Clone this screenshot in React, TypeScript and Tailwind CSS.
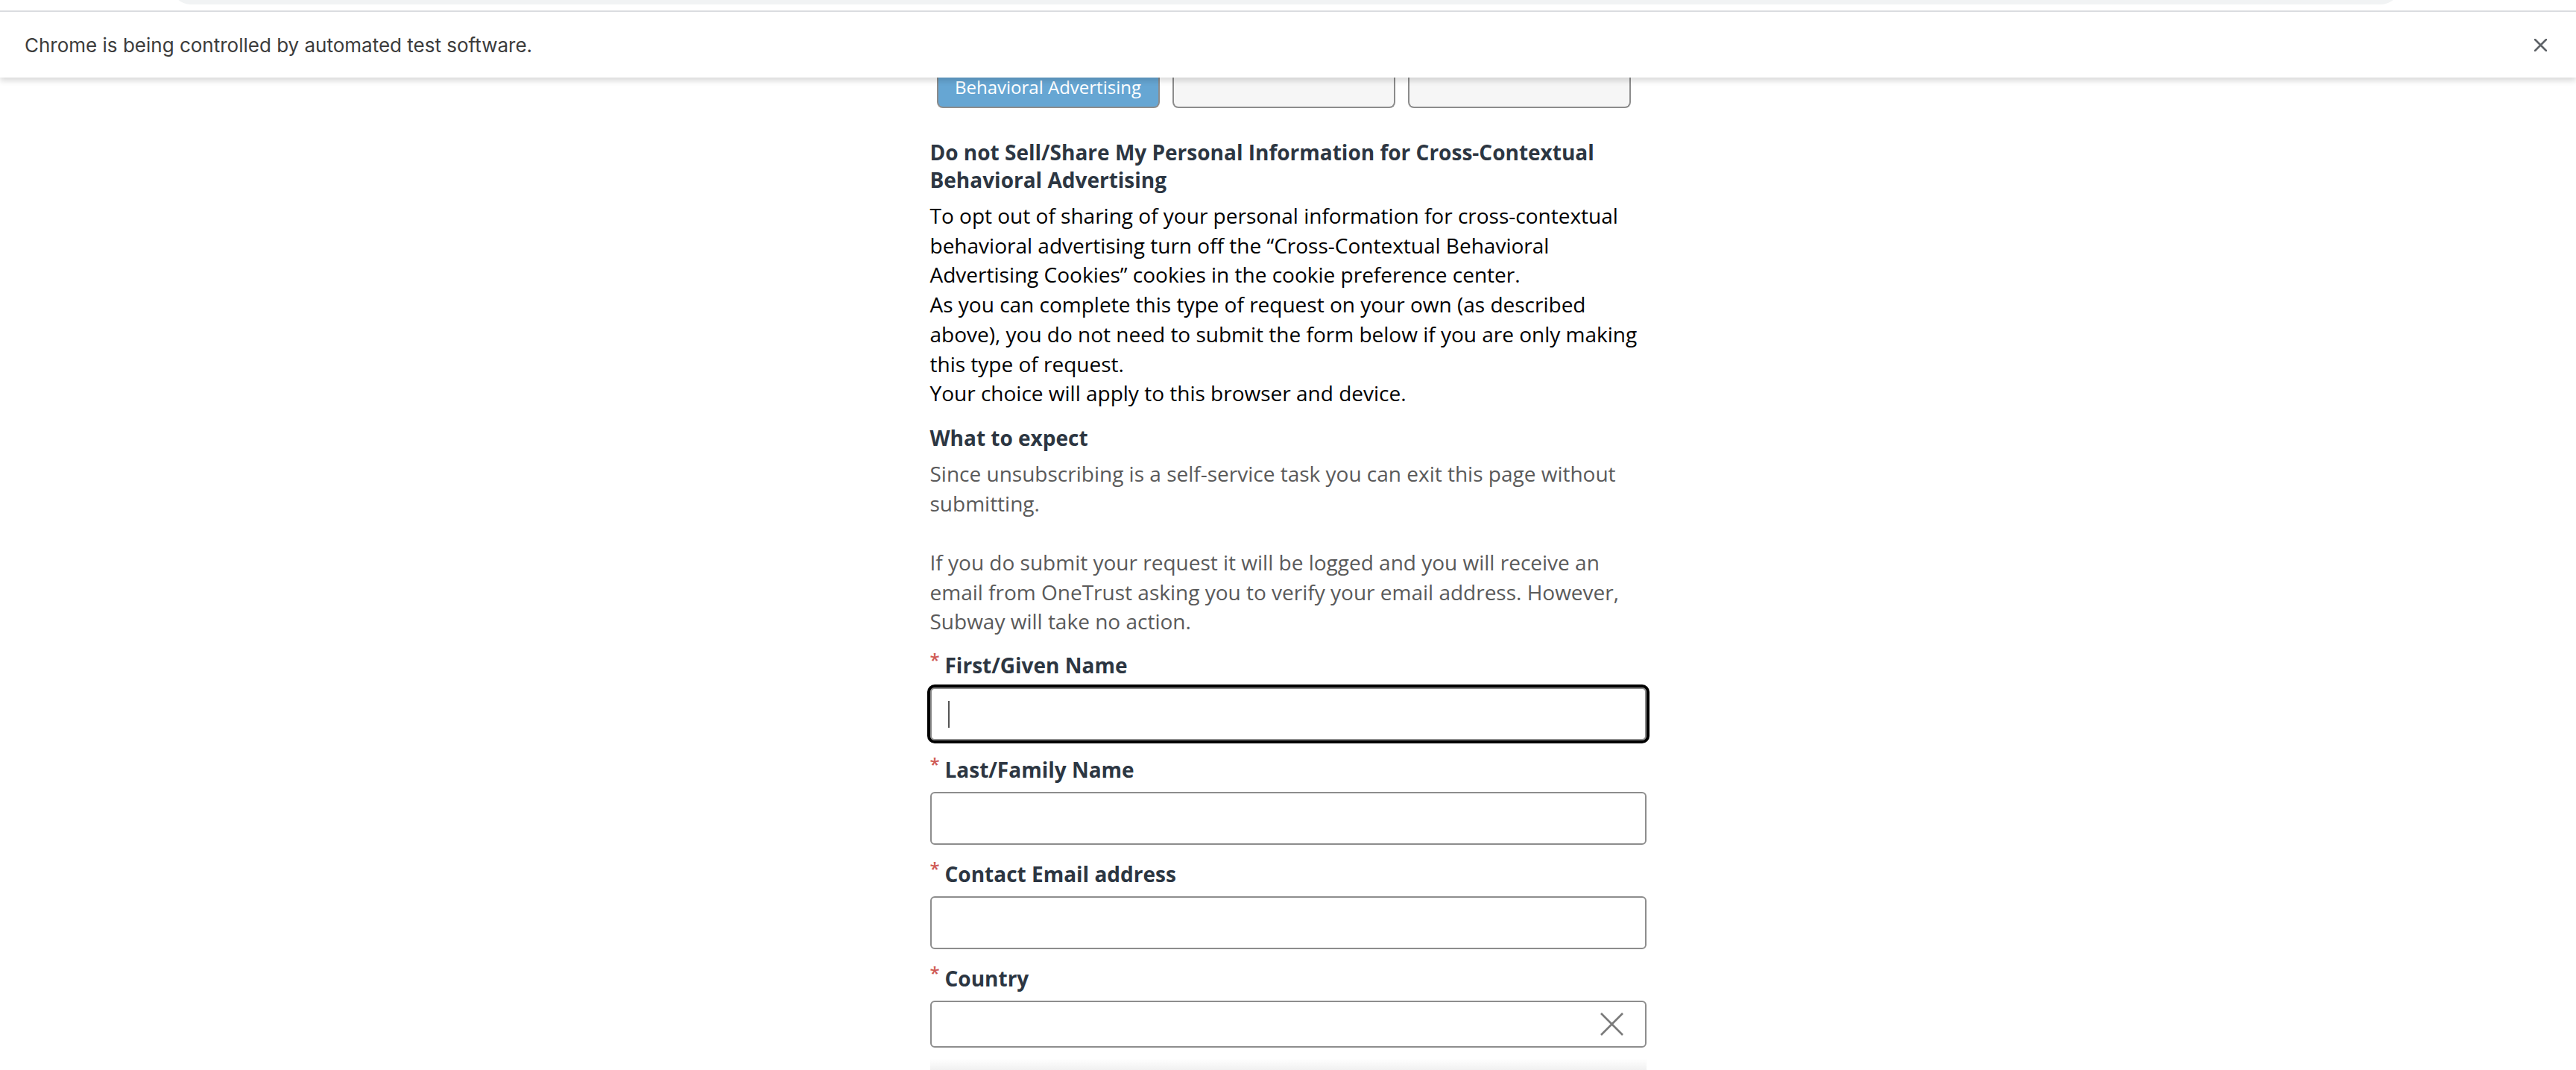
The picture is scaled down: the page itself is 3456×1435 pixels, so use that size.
import type { ReactNode } from "react";

const FONT = { fontFamily: '"Open Sans", "Noto Sans", sans-serif' };

function Label({ children }: { children: ReactNode }) {
  return (
    <div className="mb-[11px] flex items-start gap-[7px] font-bold text-[28px] leading-[37px] text-[#2c3642]">
      <span className="-mt-[1px] w-[13px] text-[24px] font-semibold leading-[24px] text-[#cf5a54]">*</span>
      <span>{children}</span>
    </div>
  );
}

function Field({ label }: { label: string }) {
  return (
    <div className="mt-[21px]">
      <Label>{label}</Label>
      <input
        type="text"
        aria-label={label}
        className="block h-[71px] w-full rounded-[6px] border-2 border-[#8d8d8d] bg-white px-[22px] text-[28px] outline-none"
      />
    </div>
  );
}

export default function App() {
  return (
    <div className="min-h-screen bg-white" style={FONT}>
      {/* browser chrome + automation infobar */}
      <header className="relative z-10 bg-white shadow-[0_4px_8px_rgba(0,0,0,0.16)]">
        <div className="flex h-[6px] items-end overflow-hidden pl-[230px] pr-[236px]">
          <div className="h-[40px] w-full shrink-0 rounded-b-[26px] bg-[#f1f3f4]" />
        </div>
        <div className="h-[8px]" />
        <div className="h-[2px] bg-[#dadce0]" />
        <div
          className="flex h-[88px] items-center justify-between pl-[33px] pr-[39px] text-[26px] text-[#3c3c3c]"
          style={{ fontFamily: 'Inter, "Liberation Sans", sans-serif' }}
        >
          <span>Chrome is being controlled by automated test software.</span>
          <svg width="17" height="17" viewBox="0 0 17 17" aria-hidden="true">
            <path d="M1 1 L16 16 M16 1 L1 16" stroke="#5f6368" strokeWidth="2.6" strokeLinecap="round" />
          </svg>
        </div>
      </header>

      <main className="mx-auto w-[961px]">
        {/* tabs (top hidden under the infobar) */}
        <div className="flex h-[41px] gap-[17px] pl-[9px]">
          <div className="flex w-[299px] justify-center rounded-b-[8px] border-x-2 border-b-2 border-[#8c8c8c] bg-[#66a6d3]">
            <span className="text-[24px] leading-[26px] text-white">Behavioral Advertising</span>
          </div>
          <div className="w-[299px] rounded-b-[8px] border-x-2 border-b-2 border-[#8c8c8c] bg-[#f6f6f6]" />
          <div className="w-[299px] rounded-b-[8px] border-x-2 border-b-2 border-[#8c8c8c] bg-[#f6f6f6]" />
        </div>

        <h2 className="mt-[41px] mb-[10px] text-[28px] font-bold leading-[37px] text-[#2c3642]">
          Do not Sell/Share My Personal Information for Cross-Contextual
          <br />
          Behavioral Advertising
        </h2>
        <div className="whitespace-nowrap text-[28px] leading-[39.7px] text-black">
          <p>
            To opt out of sharing of your personal information for cross-contextual
            <br />
            behavioral advertising turn off the “Cross-Contextual Behavioral
            <br />
            Advertising Cookies” cookies in the cookie preference center.
          </p>
          <p>
            As you can complete this type of request on your own (as described
            <br />
            above), you do not need to submit the form below if you are only making
            <br />
            this type of request.
          </p>
          <p>Your choice will apply to this browser and device.</p>
        </div>

        <h3 className="mt-[21px] mb-[10px] text-[28px] font-bold leading-[37px] text-[#2c3642]">What to expect</h3>
        <div className="whitespace-nowrap text-[28px] leading-[39.7px] text-[#5a5a5a]">
          <p>
            Since unsubscribing is a self-service task you can exit this page without
            <br />
            submitting.
          </p>
          <p className="mt-[39.7px]">
            If you do submit your request it will be logged and you will receive an
            <br />
            email from OneTrust asking you to verify your email address. However,
            <br />
            Subway will take no action.
          </p>
        </div>

        <form onSubmit={(e) => e.preventDefault()}>
          <div className="mt-[20px]">
            <Label>First/Given Name</Label>
            <div
              role="textbox"
              aria-label="First/Given Name"
              className="flex h-[71px] items-center rounded-[6px] border-2 border-[#8d8d8d] bg-white pl-[22px] outline-4 outline-solid outline-black"
            >
              <span className="h-[36px] w-[2px] bg-[#555]" />
            </div>
          </div>
          <Field label="Last/Family Name" />
          <Field label="Contact Email address" />

          <div className="mt-[21px]">
            <Label>Country</Label>
            <div className="flex h-[63px] items-center justify-end rounded-[6px] border-2 border-[#8d8d8d] bg-white pr-[28px]">
              <svg width="33" height="33" viewBox="0 0 33 33" aria-hidden="true">
                <path d="M2 2 L31 31 M31 2 L2 31" stroke="#7a7a7a" strokeWidth="2.6" />
              </svg>
            </div>
          </div>
        </form>

        <div className="mt-[15px] h-[20px] bg-gradient-to-b from-white to-[#ececec]" />
      </main>
    </div>
  );
}
